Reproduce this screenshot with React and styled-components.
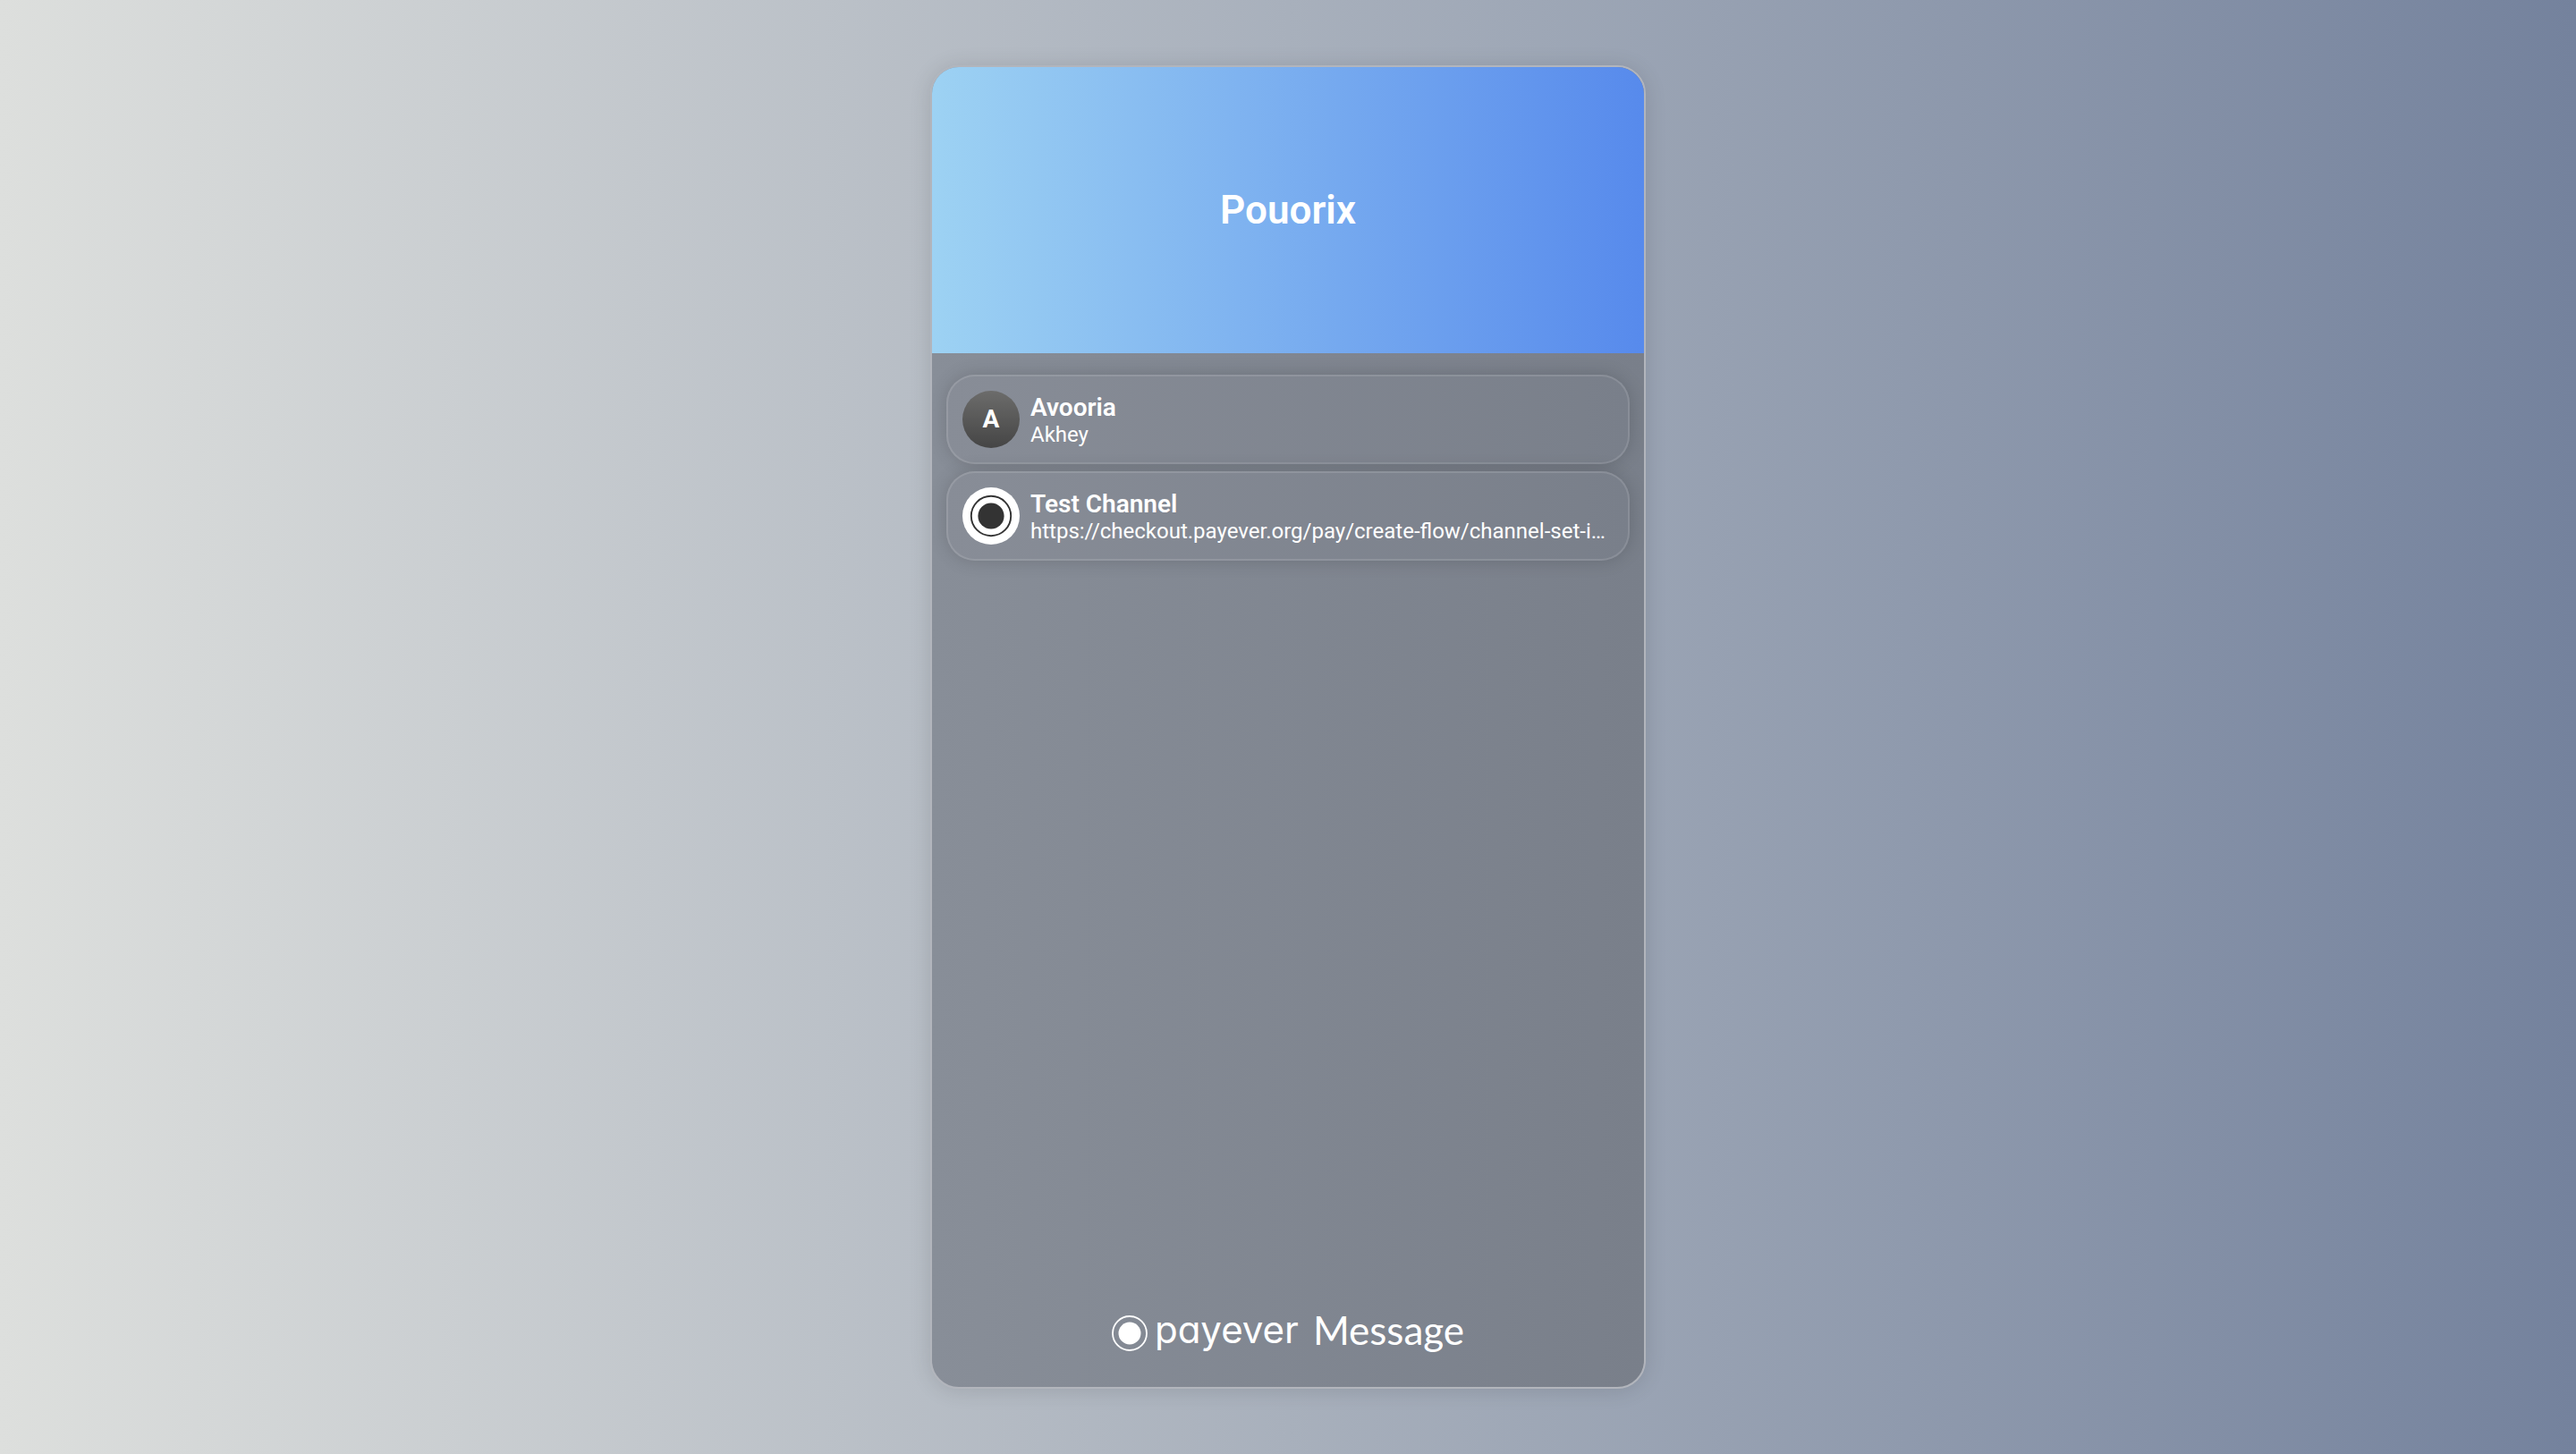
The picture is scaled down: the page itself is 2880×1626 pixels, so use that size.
import React from "react";
import styled, { createGlobalStyle } from "styled-components";

const GlobalStyle = createGlobalStyle`
  *, *::before, *::after {
    box-sizing: border-box;
  }
  body {
    margin: 0;
    font-family: Roboto, "Liberation Sans", sans-serif;
    color: #ffffff;
    -webkit-font-smoothing: antialiased;
  }
`;

const Page = styled.main`
  min-height: 100vh;
  padding: 73px 24px;
  display: flex;
  justify-content: center;
  background: linear-gradient(90deg, #dddfdd 0%, #a8b0bc 50%, #74829d 100%);
`;

const Widget = styled.section`
  width: 100%;
  max-width: 800px;
  display: flex;
  flex-direction: column;
  overflow: hidden;
  border: 2px solid #b2b5bc;
  border-radius: 32px;
  background: linear-gradient(90deg, #888e98 0%, #797f8a 100%);
  box-shadow: 0 2px 24px rgba(0, 0, 0, 0.12);
`;

const Header = styled.header`
  height: 320px;
  flex: none;
  display: flex;
  align-items: center;
  justify-content: center;
  background: linear-gradient(90deg, #9dd2f3 0%, #578aec 100%);
`;

const Title = styled.h1`
  margin: 0;
  font-size: 44px;
  line-height: 52px;
  font-weight: 600;
`;

const ChatList = styled.ul`
  flex: 1;
  margin: 0;
  padding: 24px 16px;
  display: flex;
  flex-direction: column;
  gap: 8px;
  list-style: none;
`;

const ChatButton = styled.button`
  width: 100%;
  padding: 16px;
  display: flex;
  align-items: center;
  gap: 12px;
  border: 2px solid rgba(255, 255, 255, 0.12);
  border-radius: 32px;
  background: linear-gradient(90deg, #888d97 0%, #797f8a 100%);
  background-clip: border-box;
  background-origin: border-box;
  box-shadow: 0 0 20px rgba(0, 0, 0, 0.16);
  color: inherit;
  font: inherit;
  text-align: left;
  cursor: pointer;
`;

const Avatar = styled.span`
  width: 64px;
  height: 64px;
  flex: none;
  display: flex;
  align-items: center;
  justify-content: center;
  border-radius: 50%;
  background: ${({ $light }) =>
    $light ? "#ffffff" : "linear-gradient(180deg, #6c6c6b 0%, #454545 100%)"};
  color: ${({ $light }) => ($light ? "#333333" : "#ffffff")};
  font-size: 28px;
  line-height: 32px;
  font-weight: 700;
`;

const ChatText = styled.span`
  min-width: 0;
  flex: 1;
  padding-top: 2px;
  display: flex;
  flex-direction: column;
`;

const ChatName = styled.span`
  font-size: 28px;
  line-height: 32px;
  font-weight: 600;
`;

const ChatMessage = styled.span`
  overflow: hidden;
  font-size: 24px;
  line-height: 28px;
  text-overflow: ellipsis;
  white-space: nowrap;
`;

const Footer = styled.footer`
  height: 120px;
  flex: none;
  display: flex;
  align-items: center;
  justify-content: center;
  gap: 8px;
`;

const Wordmark = styled.span`
  padding-bottom: 8px;
  display: flex;
  align-items: center;
  gap: 16px;
`;

const Brand = styled.span`
  font-family: Inter, Lato, sans-serif;
  font-feature-settings: "cv11";
  font-size: 42px;
  line-height: 56px;
  font-weight: 400;
`;

const Product = styled.span`
  font-family: Lato, "Liberation Sans", sans-serif;
  font-size: 44px;
  line-height: 56px;
  font-weight: 400;
`;

function RingMark({ size, radius, stroke, dot }) {
  return (
    <svg width={size} height={size} viewBox={`0 0 ${size} ${size}`} aria-hidden="true">
      <circle cx={size / 2} cy={size / 2} r={radius} fill="none" stroke="currentColor" strokeWidth={stroke} />
      <circle cx={size / 2} cy={size / 2} r={dot} fill="currentColor" />
    </svg>
  );
}

const chats = [
  { name: "Avooria", message: "Akhey", initial: "A" },
  {
    name: "Test Channel",
    message: "https://checkout.payever.org/pay/create-flow/channel-set-id/channel",
  },
];

export default function App() {
  return (
    <>
      <GlobalStyle />
      <Page>
        <Widget>
          <Header>
            <Title>Pouorix</Title>
          </Header>
          <ChatList>
            {chats.map((chat) => (
              <li key={chat.name}>
                <ChatButton type="button">
                  <Avatar $light={!chat.initial}>
                    {chat.initial || <RingMark size={48} radius={22.2} stroke={1.9} dot={14.6} />}
                  </Avatar>
                  <ChatText>
                    <ChatName>{chat.name}</ChatName>
                    <ChatMessage>{chat.message}</ChatMessage>
                  </ChatText>
                </ChatButton>
              </li>
            ))}
          </ChatList>
          <Footer>
            <RingMark size={40} radius={19} stroke={1.8} dot={12.5} />
            <Wordmark>
              <Brand>payever</Brand>
              <Product>Message</Product>
            </Wordmark>
          </Footer>
        </Widget>
      </Page>
    </>
  );
}
